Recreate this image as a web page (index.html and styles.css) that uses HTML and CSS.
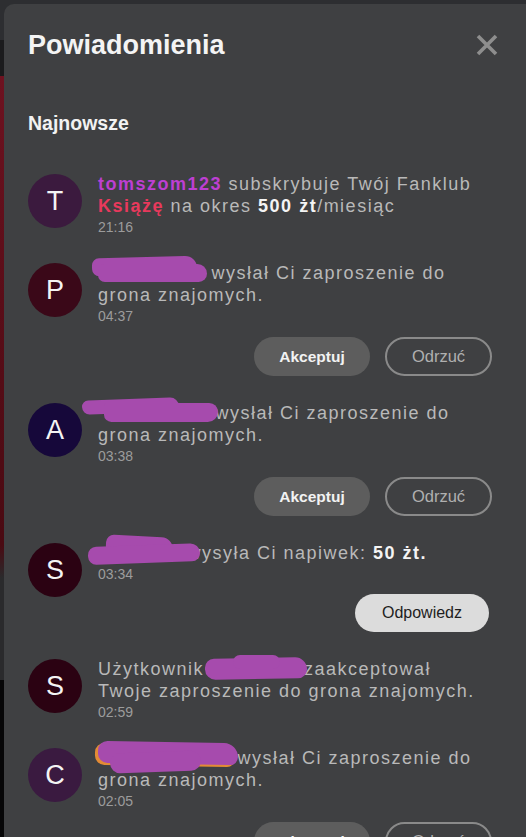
FILE: index.html
```html
<!DOCTYPE html>
<html lang="pl">
<head>
<meta charset="utf-8">
<title>Powiadomienia</title>
<link rel="stylesheet" href="styles.css">
</head>
<body>
<div class="panel">
  <header class="head">
    <h1 class="title">Powiadomienia</h1>
    <button class="close" aria-label="Zamknij">
      <svg width="30" height="30" viewBox="0 0 30 30"><path d="M6 6 L24 24 M24 6 L6 24" stroke="#8e8e8e" stroke-width="3.6" stroke-linecap="butt" fill="none"/></svg>
    </button>
  </header>
  <h2 class="section">Najnowsze</h2>

  <div class="list">
    <div class="group">
      <div class="item">
        <div class="avatar av-t">T</div>
        <div class="body">
          <p class="msg"><b class="user">tomszom123</b> subskrybuje Twój Fanklub <b class="club">Książę</b> na okres <b class="hl">500 żt</b>/miesiąc</p>
          <div class="time">21:16</div>
        </div>
      </div>
    </div>

    <div class="group">
      <div class="item">
        <div class="avatar av-p">P</div>
        <div class="body">
          <p class="msg"><span class="redact r-p"></span> wysłał Ci zaproszenie do grona znajomych.</p>
          <div class="time">04:37</div>
        </div>
      </div>
      <div class="actions">
        <button class="btn btn-accept">Akceptuj</button>
        <button class="btn btn-reject">Odrzuć</button>
      </div>
    </div>

    <div class="group">
      <div class="item">
        <div class="avatar av-a">A</div>
        <div class="body">
          <p class="msg"><span class="redact r-a"></span> wysłał Ci zaproszenie do grona znajomych.</p>
          <div class="time">03:38</div>
        </div>
      </div>
      <div class="actions">
        <button class="btn btn-accept">Akceptuj</button>
        <button class="btn btn-reject">Odrzuć</button>
      </div>
    </div>

    <div class="group">
      <div class="item">
        <div class="avatar av-s">S</div>
        <div class="body">
          <p class="msg"><span class="redact r-s"></span> wysyła Ci napiwek: <b class="hl">50 żt.</b></p>
          <div class="time">03:34</div>
        </div>
      </div>
      <div class="actions actions-tight">
        <button class="btn btn-reply">Odpowiedz</button>
      </div>
    </div>

    <div class="group">
      <div class="item">
        <div class="avatar av-s">S</div>
        <div class="body">
          <p class="msg">Użytkownik <span class="redact r-s2"></span> zaakceptował Twoje zaproszenie do grona znajomych.</p>
          <div class="time">02:59</div>
        </div>
      </div>
    </div>

    <div class="group">
      <div class="item">
        <div class="avatar av-c">C</div>
        <div class="body">
          <p class="msg"><span class="redact r-c"></span> wysłał Ci zaproszenie do grona znajomych.</p>
          <div class="time">02:05</div>
        </div>
      </div>
      <div class="actions">
        <button class="btn btn-accept">Akceptuj</button>
        <button class="btn btn-reject">Odrzuć</button>
      </div>
    </div>
  </div>
</div>
</body>
</html>
```

FILE: styles.css
```css
* { box-sizing: border-box; }

html, body {
  margin: 0;
  height: 100%;
  overflow: hidden;
}

body {
  font-family: "Liberation Sans", Arial, sans-serif;
  background:
    linear-gradient(to bottom,
      #2d2e31 0, #2d2e31 40px,
      #1b1b1d 40px, #1b1b1d 76px,
      #6e1220 76px, #5a0d18 300px, #4a0a12 545px,
      #2a2a2c 578px, #2a2a2c 680px,
      #060607 680px, #060607 838px);
  padding: 4px 0 0 4px;
}

.panel {
  background: #3f4042;
  border-top-left-radius: 10px;
  height: 900px;
  padding: 25px 34px 0 24px;
  color: #b8b8b8;
}

.head {
  display: flex;
  align-items: center;
  justify-content: space-between;
}

.title {
  margin: 0;
  font-size: 27px;
  line-height: 32px;
  font-weight: 700;
  color: #f4f4f4;
}

.close {
  border: 0;
  background: none;
  padding: 0;
  width: 30px;
  height: 30px;
  margin-right: -10px;
  display: block;
}
.close svg { display: block; }

.section {
  margin: 50px 0 0;
  font-size: 19.5px;
  line-height: 24px;
  font-weight: 700;
  color: #f2f2f2;
}

.list {
  margin-top: 38px;
  display: flex;
  flex-direction: column;
  gap: 14px;
}

.item {
  display: flex;
  align-items: flex-start;
  gap: 16px;
}

.avatar {
  flex: none;
  width: 54px;
  height: 54px;
  margin-top: 1px;
  border-radius: 50%;
  display: flex;
  align-items: center;
  justify-content: center;
  font-size: 27px;
  color: #f4f4f4;
}
.av-t { background: #3b1a3e; }
.av-p { background: #3a0818; }
.av-a { background: #16083a; }
.av-s { background: #2b0212; }
.av-c { background: #3a1a40; }

.body {
  flex: 1;
  padding-right: 8px;
  padding-bottom: 10px;
}

.msg {
  margin: 0;
  font-size: 18px;
  line-height: 22px;
  letter-spacing: 1.5px;
  color: #b9b9b9;
}

.user { color: #bd3fd2; }
.club { color: #e8395c; }
.hl { color: #f4f4f4; }

.time {
  font-size: 14px;
  line-height: 21px;
  color: #9c9c9c;
}

.actions {
  display: flex;
  justify-content: flex-end;
  gap: 15px;
  padding-bottom: 12px;
}
.actions-tight { margin-top: -3px; }

.btn {
  font-family: "Liberation Sans", Arial, sans-serif;
  height: 39px;
  border-radius: 20px;
  border: 0;
  padding: 0;
}
.btn-accept {
  width: 116px;
  background: #5d5d5d;
  color: #f2f2f2;
  font-size: 15.5px;
  font-weight: 700;
}
.btn-reject {
  width: 107px;
  background: transparent;
  border: 2px solid #8a8a8a;
  color: #b0b0b0;
  font-size: 16.5px;
}
.btn-reply {
  width: 134px;
  height: 38px;
  margin-right: 3px;
  background: #dcdcdc;
  color: #1e1e1e;
  font-size: 16px;
  border-radius: 19px;
}

/* redacted user names */
.redact {
  position: relative;
  display: inline-block;
  height: 20px;
  vertical-align: -4px;
}
.redact::before,
.redact::after {
  content: "";
  position: absolute;
  background: #a64bad;
  border-radius: 12px;
}
.r-p { width: 107px; }
.r-p::before { left: -6px; right: 8px; top: -6px; bottom: 8px; transform: rotate(-1.5deg); border-radius: 12px 20px 10px 12px; }
.r-p::after { left: 0; right: -2px; top: 1px; bottom: 1px; border-radius: 10px 14px 12px 10px; }

.r-a { width: 111px; }
.r-a::before { left: -16px; right: 30px; top: -4px; bottom: 10px; transform: rotate(-2deg); border-radius: 10px 14px 6px 12px; }
.r-a::after { left: 6px; right: -9px; top: 0; bottom: 1px; border-radius: 4px 12px 14px 10px; }

.r-s { width: 83px; }
.r-s::before { left: 8px; right: 8px; top: -7px; bottom: 10px; transform: rotate(3deg); border-radius: 12px 18px 8px 8px; }
.r-s::after { left: -10px; right: -19px; top: 2px; bottom: 0; transform: rotate(-2deg); border-radius: 12px 14px 12px 12px; }

.r-s2 { width: 87px; }
.r-s2::before { left: -6px; right: -9px; top: -1px; bottom: 0; transform: rotate(-1deg); border-radius: 12px 16px 12px 14px; }
.r-s2::after { left: 22px; right: 18px; top: -4px; bottom: 10px; border-radius: 12px; }

.r-c { width: 133px; }
.r-c::before { left: 0; right: -7px; top: -6px; bottom: 4px; transform: rotate(1deg); border-radius: 12px 18px 10px 12px; box-shadow: -3px 2px 0 #e38b35; }
.r-c::after { left: 12px; right: 30px; top: 4px; bottom: -4px; transform: rotate(-2deg); border-radius: 12px; }
```
